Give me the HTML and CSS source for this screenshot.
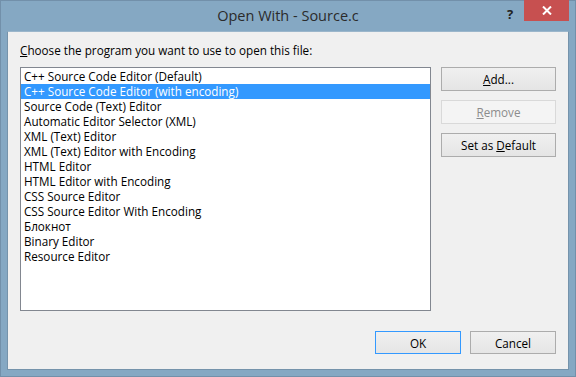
FILE: index.html
```html
<!DOCTYPE html>
<html lang="en">
<head>
    <meta charset="UTF-8">
    <title>Open With - Source.c</title>
    <link rel="stylesheet" href="styles.css">
</head>
<body>
    <div class="window">
        <div class="titlebar">
            <div class="title">Open With - Source.c</div>
            <div class="help-btn">?</div>
            <div class="close-btn">
                <svg width="10" height="9" viewBox="0 0 10 9">
                    <path d="M1 0.5 L9 8.5 M9 0.5 L1 8.5" stroke="#fff" stroke-width="2" fill="none"/>
                </svg>
            </div>
        </div>

        <div class="client">
            <div class="prompt"><u>C</u>hoose the program you want to use to open this file:</div>

            <div class="main-row">
                <div class="program-list">
                    <div class="list-item">C++ Source Code Editor (Default)</div>
                    <div class="list-item selected">C++ Source Code Editor (with encoding)</div>
                    <div class="list-item">Source Code (Text) Editor</div>
                    <div class="list-item">Automatic Editor Selector (XML)</div>
                    <div class="list-item">XML (Text) Editor</div>
                    <div class="list-item">XML (Text) Editor with Encoding</div>
                    <div class="list-item">HTML Editor</div>
                    <div class="list-item">HTML Editor with Encoding</div>
                    <div class="list-item">CSS Source Editor</div>
                    <div class="list-item">CSS Source Editor With Encoding</div>
                    <div class="list-item">Блокнот</div>
                    <div class="list-item">Binary Editor</div>
                    <div class="list-item">Resource Editor</div>
                </div>

                <div class="side-buttons">
                    <button class="btn"><u>A</u>dd...</button>
                    <button class="btn disabled"><u>R</u>emove</button>
                    <button class="btn">Set as <u>D</u>efault</button>
                </div>
            </div>

            <div class="footer">
                <button class="btn footer-btn default">OK</button>
                <button class="btn footer-btn">Cancel</button>
            </div>
        </div>
    </div>
</body>
</html>
```

FILE: styles.css
```css
* {
    margin: 0;
    padding: 0;
    box-sizing: border-box;
}

body {
    font-family: 'Open Sans', 'Noto Sans', sans-serif;
    font-size: 11.7px;
    color: #000;
    background: #85a7c2;
}

.window {
    position: relative;
    width: 576px;
    height: 377px;
    background: #85a8c3;
    border: 1px solid #7290aa;
    display: flex;
    flex-direction: column;
}

.titlebar {
    height: 30px;
    display: flex;
    align-items: flex-start;
}

/* left padding balances the caption buttons so the text centres on the window */
.title {
    flex: 1;
    padding-left: 51px;
    text-align: center;
    font-size: 14.5px;
    line-height: 30px;
    color: #2b2b2b;
}

.help-btn {
    position: absolute;
    left: 506px;
    top: 4px;
    font-weight: bold;
    font-size: 13px;
    color: #222;
}

.close-btn {
    width: 45px;
    height: 21px;
    margin-top: -1px;
    margin-right: 6px;
    background: #c75050;
    display: flex;
    align-items: center;
    justify-content: center;
}

.client {
    flex: 1;
    margin: 0 6px 6px 6px;
    background: #f0f0f0;
    border: 1px solid #7593ab;
    border-top-color: #9bb6cb;
    padding: 10px 12px 15px 12px;
    display: flex;
    flex-direction: column;
}

.prompt {
    line-height: 16px;
    margin-bottom: 9px;
    color: #000;
}

.main-row {
    display: flex;
    gap: 10px;
}

.program-list {
    width: 411px;
    height: 244px;
    background: #fff;
    border: 1px solid #828790;
    padding-top: 1px;
}

.list-item {
    height: 15px;
    line-height: 15px;
    padding-left: 3px;
    white-space: nowrap;
}

.list-item.selected {
    background: #3399ff;
    color: #fff;
}

.side-buttons {
    display: flex;
    flex-direction: column;
    gap: 9px;
}

.btn {
    width: 115px;
    height: 24px;
    font-family: inherit;
    font-size: 11.7px;
    color: #000;
    background: linear-gradient(#f0f0f0, #e5e5e5);
    border: 1px solid #acacac;
}

.btn.disabled {
    color: #8c8c8c;
    background: #f4f4f4;
    border-color: #d9d9d9;
}

.footer {
    margin-top: auto;
    display: flex;
    justify-content: flex-end;
    gap: 9px;
}

.footer-btn {
    width: 86px;
    height: 23px;
}

.footer-btn.default {
    border-color: #3399ff;
}
```
